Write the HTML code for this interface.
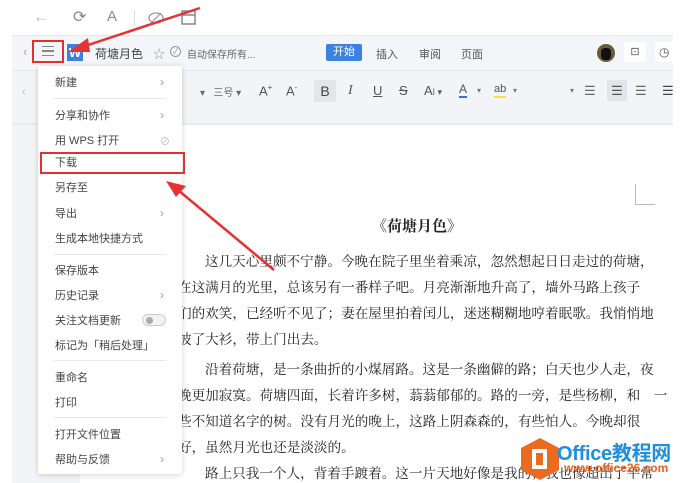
<!DOCTYPE html>
<html><head><meta charset="utf-8"><style>
*{margin:0;padding:0;box-sizing:border-box}
body{width:682px;height:483px;overflow:hidden;position:relative;background:#fff;font-family:"Liberation Sans","Noto Sans CJK SC",sans-serif;color:#333}
.a{position:absolute;white-space:nowrap}
.hdr{position:absolute;left:12px;top:35px;width:661px;height:35px;background:#f4f5f8;border-top:1px solid #e6e8ec}
.tb{position:absolute;left:12px;top:70px;width:661px;height:55px;background:#f3f4f7;border-top:1px solid #e8e9ee;border-bottom:2px solid #e9eaef}
.strip{position:absolute;left:12px;top:125px;width:68px;height:358px;background:#f3f4f7}
.doc{font-family:"Liberation Serif","Noto Serif CJK SC","Noto Sans CJK SC",serif;font-size:13.6px;color:#222}
.ln{position:absolute;left:178px;width:452px;white-space:nowrap;text-align:justify;text-align-last:justify}
.ln.i{padding-left:27px}
.ln.e{text-align-last:left}
.menu{position:absolute;left:38px;top:66px;width:144px;height:408px;background:#fff;box-shadow:0 1px 6px rgba(0,0,0,.18);border-radius:2px}
.mi{position:absolute;left:17px;font-size:11px;color:#444;white-space:nowrap}
.ar{position:absolute;left:122px;font-size:12px;color:#999}
.sep{position:absolute;left:16px;width:112px;height:1px;background:#e8e8e8}
</style></head><body>
<div class="a" style="left:33px;top:7px;font-size:17px;color:#bbb">←</div>
<div class="a" style="left:73px;top:7px;font-size:16px;color:#888">⟳</div>
<div class="a" style="left:107px;top:8px;font-size:15px;color:#888">A</div>
<div class="a" style="left:134px;top:10px;width:1px;height:16px;background:#ddd"></div>
<svg class="a" style="left:147px;top:11px" width="18" height="14"><ellipse cx="9" cy="7" rx="7" ry="5" fill="none" stroke="#999" stroke-width="1.3"/><line x1="4" y1="12" x2="14" y2="2" stroke="#999" stroke-width="1.2"/></svg>
<svg class="a" style="left:181px;top:10px" width="15" height="15"><rect x="1" y="1" width="13" height="13" fill="none" stroke="#777" stroke-width="1.3"/><line x1="1" y1="5" x2="14" y2="5" stroke="#777" stroke-width="1.3"/></svg>
<div class="hdr"></div>
<div class="a" style="left:23px;top:44px;font-size:13px;color:#aaa">‹</div>
<div class="a" style="left:42px;top:46px;width:12px;height:10px;border-top:1.5px solid #888;border-bottom:1.5px solid #888"><div style="margin-top:3px;height:1.5px;background:#888"></div></div>
<div class="a" style="left:67px;top:44px;width:16px;height:17px;background:#3b82e0;color:#fff;font-weight:bold;font-size:13px;text-align:center;line-height:17px">W</div>
<div class="a" style="left:95px;top:45px;font-size:12px;color:#444">荷塘月色</div>
<div class="a" style="left:153px;top:45px;font-size:12px;color:#999">☆</div>
<div class="a" style="left:170px;top:46px;width:11px;height:11px;border:1px solid #999;border-radius:50%;font-size:8px;text-align:center;line-height:9px;color:#999">✓</div>
<div class="a" style="left:187px;top:46px;font-size:10px;color:#666">自动保存所有...</div>
<div class="a" style="left:326px;top:44px;width:36px;height:17px;background:#3b82e0;color:#fff;font-size:11px;text-align:center;line-height:17px;border-radius:2px">开始</div>
<div class="a" style="left:376px;top:46px;font-size:11px;color:#555">插入</div>
<div class="a" style="left:419px;top:46px;font-size:11px;color:#555">审阅</div>
<div class="a" style="left:461px;top:46px;font-size:11px;color:#555">页面</div>
<div class="a" style="left:597px;top:44px;width:18px;height:18px;border-radius:50%;background:#6b5a3a"><div style="margin:4px 0 0 4px;width:10px;height:12px;background:#111;border-radius:4px"></div></div>
<div class="a" style="left:624px;top:42px;width:22px;height:20px;background:#fff;font-size:11px;text-align:center;line-height:20px;color:#555">⊡</div>
<div class="a" style="left:655px;top:42px;width:20px;height:20px;background:#fff;font-size:12px;line-height:20px;color:#555;padding-left:4px">◷</div>
<div class="tb"></div>
<div class="strip"></div>
<div class="a" style="left:22px;top:86px;font-size:11px;color:#bbb">‹</div>
<div class="a" style="left:200px;top:84px;font-size:10px;color:#666">▾ &nbsp;&nbsp;三号 ▾</div>
<div class="a" style="left:259px;top:83px;font-size:13px;color:#555">A<sup style="font-size:8px">+</sup></div>
<div class="a" style="left:286px;top:83px;font-size:13px;color:#555">A<sup style="font-size:8px">-</sup></div>
<div class="a" style="left:314px;top:80px;width:22px;height:22px;background:#e3e5ea;font-size:14px;text-align:center;line-height:22px;color:#444">B</div>
<div class="a" style="left:348px;top:83px;font-size:14px;font-style:italic;color:#555;font-family:'Liberation Serif',serif">I</div>
<div class="a" style="left:373px;top:83px;font-size:13px;text-decoration:underline;color:#555">U</div>
<div class="a" style="left:399px;top:83px;font-size:13px;text-decoration:line-through;color:#555">S</div>
<div class="a" style="left:424px;top:83px;font-size:13px;color:#555">A<span style="font-size:9px">ǀ ▾</span></div>
<div class="a" style="left:459px;top:82px;font-size:12px;color:#555;border-bottom:2px solid #3b6fd0;line-height:14px">A</div><div class="a" style="left:477px;top:86px;font-size:8px;color:#777">▾</div>
<div class="a" style="left:494px;top:82px;font-size:11px;color:#555;border-bottom:2px solid #f0e040;line-height:14px">ab</div><div class="a" style="left:513px;top:86px;font-size:8px;color:#777">▾</div>
<div class="a" style="left:570px;top:86px;font-size:8px;color:#777">▾</div>
<div class="a" style="left:584px;top:83px;font-size:13px;color:#666">☰</div>
<div class="a" style="left:607px;top:80px;width:20px;height:21px;background:#e3e5ea;font-size:13px;color:#555;text-align:center;line-height:21px">☰</div>
<div class="a" style="left:635px;top:83px;font-size:13px;color:#666">☰</div>
<div class="a" style="left:662px;top:83px;font-size:13px;color:#444">☰</div>
<div class="a" style="left:635px;top:184px;width:20px;height:21px;border-left:1px solid #bbb;border-bottom:1px solid #bbb"></div>
<div class="a doc" style="left:372px;top:215px;font-size:15px;font-weight:bold">《荷塘月色》</div>
<div class="doc">
<div class="ln i" style="top:250px">这几天心里颇不宁静。今晚在院子里坐着乘凉，忽然想起日日走过的荷塘，</div>
<div class="ln" style="top:276px">在这满月的光里，总该另有一番样子吧。月亮渐渐地升高了，墙外马路上孩子</div>
<div class="ln" style="top:302px">们的欢笑，已经听不见了；妻在屋里拍着闰儿，迷迷糊糊地哼着眠歌。我悄悄地</div>
<div class="ln e" style="top:328px">披了大衫，带上门出去。</div>
<div class="ln i" style="top:358px">沿着荷塘，是一条曲折的小煤屑路。这是一条幽僻的路；白天也少人走，夜</div>
<div class="ln" style="top:384px">晚更加寂寞。荷塘四面，长着许多树，蓊蓊郁郁的。路的一旁，是些杨柳，和　一</div>
<div class="ln" style="top:410px">些不知道名字的树。没有月光的晚上，这路上阴森森的，有些怕人。今晚却很</div>
<div class="ln e" style="top:436px">好，虽然月光也还是淡淡的。</div>
<div class="ln i" style="top:462px">路上只我一个人，背着手踱着。这一片天地好像是我的；我也像超出了平常</div>
</div>
<div class="menu">
<div class="mi" style="top:8px">新建</div><div class="ar" style="top:9px">›</div>
<div class="sep" style="top:32px"></div>
<div class="mi" style="top:41px">分享和协作</div><div class="ar" style="top:42px">›</div>
<div class="mi" style="top:66px">用 WPS 打开</div><div class="ar" style="top:67px;font-size:10px;color:#bbb">⊘</div>
<div class="mi" style="top:88px">下载</div>
<div class="mi" style="top:113px">另存至</div>
<div class="mi" style="top:139px">导出</div><div class="ar" style="top:140px">›</div>
<div class="mi" style="top:164px">生成本地快捷方式</div>
<div class="sep" style="top:188px"></div>
<div class="mi" style="top:196px">保存版本</div>
<div class="mi" style="top:221px">历史记录</div><div class="ar" style="top:222px">›</div>
<div class="mi" style="top:246px">关注文档更新</div>
<div class="a" style="left:104px;top:248px;width:24px;height:12px;border:1px solid #ccc;border-radius:6px;background:#f2f2f2"><div style="margin:2px 0 0 3px;width:7px;height:7px;border-radius:50%;background:#aaa"></div></div>
<div class="mi" style="top:271px">标记为「稍后处理」</div>
<div class="sep" style="top:294px"></div>
<div class="mi" style="top:303px">重命名</div>
<div class="mi" style="top:328px">打印</div>
<div class="sep" style="top:351px"></div>
<div class="mi" style="top:360px">打开文件位置</div>
<div class="mi" style="top:385px">帮助与反馈</div><div class="ar" style="top:386px">›</div>
</div>
<div class="a" style="left:32px;top:40px;width:32px;height:23px;border:2px solid #e03030"></div>
<div class="a" style="left:40px;top:152px;width:145px;height:22px;border:2px solid #e03030"></div>
<svg class="a" style="left:0;top:0" width="682" height="483">
<line x1="200" y1="8" x2="82" y2="47" stroke="#e53333" stroke-width="2.5"/>
<polygon points="68,52 88,38 90,52" fill="#e53333"/>
<line x1="274" y1="270" x2="178" y2="190" stroke="#e53333" stroke-width="2.5"/>
<polygon points="166,181 186,186 176,197" fill="#e53333"/>
</svg>
<svg class="a" style="left:519px;top:437px" width="42" height="44"><polygon points="21,1 40,11 40,33 21,43 2,33 2,11" fill="#ea6a1f"/><rect x="13" y="12" width="15" height="20" fill="#fff"/><rect x="17" y="16" width="7" height="12" fill="#ea6a1f"/></svg>
<div class="a" style="left:557px;top:437px;font-size:20px;font-weight:bold;color:#1e8fe0;letter-spacing:-0.3px">Office教程网</div>
<div class="a" style="left:564px;top:461px;font-size:12px;font-weight:bold;color:#e8641e">www.office26.com</div>
</body></html>
